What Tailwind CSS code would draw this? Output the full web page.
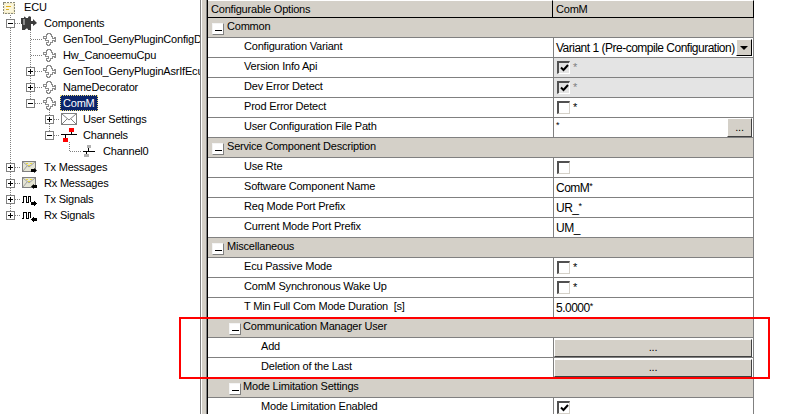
<!DOCTYPE html>
<html lang="en">
<head>
    <meta charset="UTF-8">
    <title>ComM Configuration</title>
    <script src="https://cdn.jsdelivr.net/npm/@tailwindcss/browser@4"></script>
</head>
<body class="bg-white">
<div class="relative w-[791px] h-[414px] overflow-hidden flex bg-white text-black text-[11px] leading-none tracking-[-0.2px] font-['Liberation_Sans',Arial,sans-serif]">

    <!-- Tree -->
    <div class="relative w-[201px] h-full shrink-0 overflow-hidden border-r border-[#808080]">
        <svg class="absolute left-0 top-0" width="200" height="230" fill="none" stroke="#808080" stroke-dasharray="1 1">
            <path d="M10.5 13V19M10.5 28V163M10.5 172V179M10.5 188V195M10.5 204V211"/>
            <path d="M15 23.5H20M15 167.5H21M15 183.5H21M15 199.5H21M15 215.5H21"/>
            <path d="M30.5 30V67M30.5 76V83M30.5 92V99"/>
            <path d="M31 39.5H42M31 55.5H42M35 71.5H42M35 87.5H42M35 103.5H42"/>
            <path d="M49.5 108V115M49.5 124V131"/>
            <path d="M54 119.5H60M54 135.5H60"/>
            <path d="M69.5 142V151M70 151.5H82"/>
        </svg>

        <div class="relative flex flex-col">
            <!-- ECU -->
            <div class="flex items-center h-[15px] pl-[3px]">
                <svg class="shrink-0 mr-[9px]" width="12" height="12" viewBox="0 0 12 12" shape-rendering="crispEdges"><rect x="0.5" y="0.5" width="11" height="11" fill="#f4ecc8" stroke="#8a8a7a" stroke-dasharray="2 1"/><rect x="2" y="2" width="8" height="8" fill="#fbf6dc"/><path d="M3 4.5H8M3 7.5H6" stroke="#e0b020"/></svg>
                <span>ECU</span>
            </div>
            <!-- Components -->
            <div class="flex items-center h-4 pl-[6px]">
                <span class="flex shrink-0 items-center justify-center w-[9px] h-[9px] mr-[6px] bg-white border border-[#808080]"><span class="w-[5px] h-px bg-black"></span></span>
                <svg class="shrink-0 mr-[7px]" width="16" height="15" viewBox="0 0 16 15"><path d="M0 2H3C3 0 4 0 5 2H7C7 0 9 0 10 1V5H12V3L16 7L12 10V8H10V14H7C7 12 5 12 4 14H1V8H0Z" fill="#3c3c3c"/><path d="M2 3H4V9H2Z" fill="#8c8c8c"/></svg>
                <span>Components</span>
            </div>
            <!-- Level 2 -->
            <div class="flex items-center h-4 pl-[43px]">
                <svg class="shrink-0 mr-[7px]" width="13" height="13" viewBox="0 0 13 13" fill="#fff" stroke="#8c8c8c" shape-rendering="crispEdges"><path d="M0.5 3.5H3.5V1.5H4.5V0.5H7.5V1.5H8.5V3.5H9.5V5.5H11.5V4.5H12.5V8.5H11.5V7.5H9.5V9.5H7.5V11.5H6.5V12.5H4.5V11.5H3.5V9.5H5.5V7.5H2.5V5.5H0.5Z"/><path d="M3.5 3.5V5.5"/></svg>
                <span class="whitespace-nowrap">GenTool_GenyPluginConfigD</span>
            </div>
            <div class="flex items-center h-4 pl-[43px]">
                <svg class="shrink-0 mr-[7px]" width="13" height="13" viewBox="0 0 13 13" fill="#fff" stroke="#8c8c8c" shape-rendering="crispEdges"><path d="M0.5 3.5H3.5V1.5H4.5V0.5H7.5V1.5H8.5V3.5H9.5V5.5H11.5V4.5H12.5V8.5H11.5V7.5H9.5V9.5H7.5V11.5H6.5V12.5H4.5V11.5H3.5V9.5H5.5V7.5H2.5V5.5H0.5Z"/><path d="M3.5 3.5V5.5"/></svg>
                <span>Hw_CanoeemuCpu</span>
            </div>
            <div class="flex items-center h-4 pl-[26px]">
                <span class="relative flex shrink-0 items-center justify-center w-[9px] h-[9px] mr-[8px] bg-white border border-[#808080]"><span class="w-[5px] h-px bg-black"></span><span class="absolute w-px h-[5px] bg-black"></span></span>
                <svg class="shrink-0 mr-[7px]" width="13" height="13" viewBox="0 0 13 13" fill="#fff" stroke="#8c8c8c" shape-rendering="crispEdges"><path d="M0.5 3.5H3.5V1.5H4.5V0.5H7.5V1.5H8.5V3.5H9.5V5.5H11.5V4.5H12.5V8.5H11.5V7.5H9.5V9.5H7.5V11.5H6.5V12.5H4.5V11.5H3.5V9.5H5.5V7.5H2.5V5.5H0.5Z"/><path d="M3.5 3.5V5.5"/></svg>
                <span class="whitespace-nowrap">GenTool_GenyPluginAsrIfEcu</span>
            </div>
            <div class="flex items-center h-4 pl-[26px]">
                <span class="relative flex shrink-0 items-center justify-center w-[9px] h-[9px] mr-[8px] bg-white border border-[#808080]"><span class="w-[5px] h-px bg-black"></span><span class="absolute w-px h-[5px] bg-black"></span></span>
                <svg class="shrink-0 mr-[7px]" width="13" height="13" viewBox="0 0 13 13" fill="#fff" stroke="#8c8c8c" shape-rendering="crispEdges"><path d="M0.5 3.5H3.5V1.5H4.5V0.5H7.5V1.5H8.5V3.5H9.5V5.5H11.5V4.5H12.5V8.5H11.5V7.5H9.5V9.5H7.5V11.5H6.5V12.5H4.5V11.5H3.5V9.5H5.5V7.5H2.5V5.5H0.5Z"/><path d="M3.5 3.5V5.5"/></svg>
                <span>NameDecorator</span>
            </div>
            <!-- ComM selected -->
            <div class="flex items-center h-4 pl-[26px]">
                <span class="flex shrink-0 items-center justify-center w-[9px] h-[9px] mr-[8px] bg-white border border-[#808080]"><span class="w-[5px] h-px bg-black"></span></span>
                <svg class="shrink-0 mr-[4px]" width="13" height="13" viewBox="0 0 13 13" fill="#fff" stroke="#8c8c8c" shape-rendering="crispEdges"><path d="M0.5 3.5H3.5V1.5H4.5V0.5H7.5V1.5H8.5V3.5H9.5V5.5H11.5V4.5H12.5V8.5H11.5V7.5H9.5V9.5H7.5V11.5H6.5V12.5H4.5V11.5H3.5V9.5H5.5V7.5H2.5V5.5H0.5Z"/><path d="M3.5 3.5V5.5"/></svg>
                <span class="flex items-center h-4 px-[2px] bg-[#0a246a] text-white border border-dotted border-[#f0e080]">ComM</span>
            </div>
            <!-- Level 3 -->
            <div class="flex items-center h-4 pl-[45px]">
                <span class="relative flex shrink-0 items-center justify-center w-[9px] h-[9px] mr-[7px] bg-white border border-[#808080]"><span class="w-[5px] h-px bg-black"></span><span class="absolute w-px h-[5px] bg-black"></span></span>
                <svg class="shrink-0 mr-[6px]" width="16" height="12" viewBox="0 0 16 12" fill="#fff" stroke="#808080"><rect x="0.5" y="0.5" width="15" height="11"/><path d="M1 1L8 7L15 1M1 11L6 6M15 11L10 6"/></svg>
                <span>User Settings</span>
            </div>
            <div class="flex items-center h-4 pl-[45px]">
                <span class="flex shrink-0 items-center justify-center w-[9px] h-[9px] mr-[7px] bg-white border border-[#808080]"><span class="w-[5px] h-px bg-black"></span></span>
                <svg class="shrink-0 mr-[6px]" width="16" height="15" viewBox="0 0 16 15" shape-rendering="crispEdges"><path d="M0 6.5H16" stroke="#000"/><path d="M10.5 4V6M4.5 7V10" stroke="#000"/><rect x="8" y="0" width="5" height="4" fill="#f00"/><rect x="2" y="10" width="5" height="4" fill="#f00"/></svg>
                <span>Channels</span>
            </div>
            <div class="flex items-center h-4 pl-[83px]">
                <svg class="shrink-0 mr-[8px]" width="12" height="13" viewBox="0 0 12 13" shape-rendering="crispEdges"><path d="M0 6.5H12" stroke="#000"/><path d="M5.5 3V6M3.5 7V9" stroke="#000"/><rect x="4" y="0" width="4" height="3" fill="#b0b0b0"/><rect x="1" y="9" width="5" height="3" fill="#b0b0b0"/></svg>
                <span>Channel0</span>
            </div>
            <!-- Level 1 -->
            <div class="flex items-center h-4 pl-[6px]">
                <span class="relative flex shrink-0 items-center justify-center w-[9px] h-[9px] mr-[7px] bg-white border border-[#808080]"><span class="w-[5px] h-px bg-black"></span><span class="absolute w-px h-[5px] bg-black"></span></span>
                <svg class="shrink-0 mr-[7px]" width="15" height="14" viewBox="0 0 15 14"><rect x="0.5" y="1.5" width="13" height="10" fill="#e4e4d4" stroke="#808080"/><path d="M1 2L7 7L13 2M1 11L5 6" fill="none" stroke="#a0a0a0"/><path d="M4 3.5H6M8 3.5H10M6 5.5H8" stroke="#e8d840"/><path d="M9 9H12V8L15 10.5L12 13V12H9Z"/></svg>
                <span>Tx Messages</span>
            </div>
            <div class="flex items-center h-4 pl-[6px]">
                <span class="relative flex shrink-0 items-center justify-center w-[9px] h-[9px] mr-[7px] bg-white border border-[#808080]"><span class="w-[5px] h-px bg-black"></span><span class="absolute w-px h-[5px] bg-black"></span></span>
                <svg class="shrink-0 mr-[7px]" width="15" height="14" viewBox="0 0 15 14"><rect x="0.5" y="1.5" width="13" height="10" fill="#e4e4d4" stroke="#808080"/><path d="M1 2L7 7L13 2M1 11L5 6" fill="none" stroke="#a0a0a0"/><path d="M4 3.5H6M8 3.5H10M6 5.5H8" stroke="#e8d840"/><path d="M15 9H12V8L9 10.5L12 13V12H15Z"/></svg>
                <span>Rx Messages</span>
            </div>
            <div class="flex items-center h-4 pl-[6px]">
                <span class="relative flex shrink-0 items-center justify-center w-[9px] h-[9px] mr-[7px] bg-white border border-[#808080]"><span class="w-[5px] h-px bg-black"></span><span class="absolute w-px h-[5px] bg-black"></span></span>
                <svg class="shrink-0 mr-[7px]" width="15" height="14" viewBox="0 0 15 14" fill="none" shape-rendering="crispEdges"><path d="M0 10.5H1.5V4.5H4.5V10.5H6.5V4.5H8.5V10" stroke="#000"/><path d="M9 10H12V9L15 11.5L12 14V13H9Z" fill="#000"/></svg>
                <span>Tx Signals</span>
            </div>
            <div class="flex items-center h-4 pl-[6px]">
                <span class="relative flex shrink-0 items-center justify-center w-[9px] h-[9px] mr-[7px] bg-white border border-[#808080]"><span class="w-[5px] h-px bg-black"></span><span class="absolute w-px h-[5px] bg-black"></span></span>
                <svg class="shrink-0 mr-[7px]" width="15" height="14" viewBox="0 0 15 14" fill="none" shape-rendering="crispEdges"><path d="M0 10.5H1.5V4.5H4.5V10.5H6.5V4.5H8.5V10" stroke="#000"/><path d="M15 10H12V9L9 11.5L12 14V13H15Z" fill="#000"/></svg>
                <span>Rx Signals</span>
            </div>
        </div>
    </div>

    <!-- Splitter -->
    <div class="w-[6px] h-full shrink-0 bg-[#d4d0c8] border-l border-white border-r border-r-[#808080]"></div>

    <!-- Grid -->
    <div class="w-[547px] h-full shrink-0 overflow-hidden border-l border-black">
        <div class="grid grid-cols-[345px_201px] w-[546px]">
            <!-- Header -->
            <div class="flex items-center h-[18px] pl-[3px] bg-[#d4d0c8] border-t border-white border-r border-r-black border-b border-b-black">Configurable Options</div>
            <div class="flex items-center h-[18px] pl-[3px] bg-[#d4d0c8] border-t border-white border-r border-r-black border-b border-b-black">ComM</div>
        </div>

        <div class="w-[546px] border-r border-[#808080]">
            <!-- Common -->
            <div class="flex h-5 pl-[4px] bg-[#d4d0c8] border-b border-[#808080]">
                <span class="flex items-center justify-center w-3 h-3 mt-[5px] mr-[3px] bg-white border-l border-t border-[#f4f4f4] border-r border-b border-r-[#808080] border-b-[#808080]"><span class="w-[7px] h-px mt-[3px] bg-black"></span></span>
                <span class="mt-[3px]">Common</span>
            </div>
            <div class="grid grid-cols-[346px_1fr] h-5 border-b border-[#808080]">
                <div class="pl-[36px] pt-[3px] border-r border-[#808080]">Configuration Variant</div>
                <div class="flex items-center justify-between pl-[2px] pr-px">
                    <span class="text-[12px] tracking-[-0.5px] whitespace-nowrap">Variant 1 (Pre-compile Configuration)</span>
                    <span class="flex items-center justify-center w-4 h-[17px] bg-[#d4d0c8] border border-t-white border-l-white border-r-black border-b-black"><span class="border-x-[4px] border-t-[4px] border-x-transparent border-t-black"></span></span>
                </div>
            </div>
            <div class="grid grid-cols-[346px_1fr] h-5 border-b border-[#808080]">
                <div class="pl-[36px] pt-[3px] border-r border-[#808080] bg-white">Version Info Api</div>
                <div class="flex items-center pl-[3px] bg-[#e4e4e4]">
                    <span class="flex items-center justify-center w-[13px] h-[13px] mr-[3px] border-t-2 border-l-2 border-r border-b border-t-[#505050] border-l-[#505050] border-r-white border-b-white"><svg width="9" height="8" viewBox="0 0 9 8" fill="none"><path d="M1 3.5L3.5 6L8 1" stroke="#000" stroke-width="2"/></svg></span>
                    <span class="text-[#808080]">*</span>
                </div>
            </div>
            <div class="grid grid-cols-[346px_1fr] h-5 border-b border-[#808080]">
                <div class="pl-[36px] pt-[3px] border-r border-[#808080]">Dev Error Detect</div>
                <div class="flex items-center pl-[3px] bg-[#e4e4e4]">
                    <span class="flex items-center justify-center w-[13px] h-[13px] mr-[3px] border-t-2 border-l-2 border-r border-b border-t-[#505050] border-l-[#505050] border-r-white border-b-white"><svg width="9" height="8" viewBox="0 0 9 8" fill="none"><path d="M1 3.5L3.5 6L8 1" stroke="#000" stroke-width="2"/></svg></span>
                    <span class="text-[#808080]">*</span>
                </div>
            </div>
            <div class="grid grid-cols-[346px_1fr] h-5 border-b border-[#808080]">
                <div class="pl-[36px] pt-[3px] border-r border-[#808080]">Prod Error Detect</div>
                <div class="flex items-center pl-[3px]">
                    <span class="w-[13px] h-[13px] mr-[3px] border-t-2 border-l-2 border-r border-b border-t-[#505050] border-l-[#505050] border-r-[#d4d0c8] border-b-[#d4d0c8]"></span>
                    <span>*</span>
                </div>
            </div>
            <div class="grid grid-cols-[346px_1fr] h-5 border-b border-[#808080]">
                <div class="pl-[36px] pt-[3px] border-r border-[#808080]">User Configuration File Path</div>
                <div class="flex justify-between pl-[2px] pr-px">
                    <span class="pt-[3px] text-[9px]">*</span>
                    <span class="flex items-end justify-center w-[25px] h-[19px] pb-[3px] bg-[#d4d0c8] border border-t-white border-l-white border-r-[#404040] border-b-[#404040]">...</span>
                </div>
            </div>

            <!-- Service Component Description -->
            <div class="flex h-5 pl-[4px] bg-[#d4d0c8] border-b border-[#808080]">
                <span class="flex items-center justify-center w-3 h-3 mt-[5px] mr-[3px] bg-white border-l border-t border-[#f4f4f4] border-r border-b border-r-[#808080] border-b-[#808080]"><span class="w-[7px] h-px mt-[3px] bg-black"></span></span>
                <span class="mt-[3px]">Service Component Description</span>
            </div>
            <div class="grid grid-cols-[346px_1fr] h-5 border-b border-[#808080]">
                <div class="pl-[36px] pt-[3px] border-r border-[#808080]">Use Rte</div>
                <div class="flex items-center pl-[3px]">
                    <span class="w-[13px] h-[13px] mr-[3px] border-t-2 border-l-2 border-r border-b border-t-[#505050] border-l-[#505050] border-r-[#d4d0c8] border-b-[#d4d0c8]"></span>
                </div>
            </div>
            <div class="grid grid-cols-[346px_1fr] h-5 border-b border-[#808080]">
                <div class="pl-[36px] pt-[3px] border-r border-[#808080]">Software Component Name</div>
                <div class="flex items-center pl-[2px] text-[12px] tracking-[-0.5px]"><span>ComM<span class="text-[9px] align-top">*</span></span></div>
            </div>
            <div class="grid grid-cols-[346px_1fr] h-5 border-b border-[#808080]">
                <div class="pl-[36px] pt-[3px] border-r border-[#808080]">Req Mode Port Prefix</div>
                <div class="flex items-center pl-[2px] text-[12px] tracking-[-0.5px]"><span>UR_<span class="text-[9px] align-top">*</span></span></div>
            </div>
            <div class="grid grid-cols-[346px_1fr] h-5 border-b border-[#808080]">
                <div class="pl-[36px] pt-[3px] border-r border-[#808080]">Current Mode Port Prefix</div>
                <div class="flex items-center pl-[2px] text-[12px] tracking-[-0.5px]">UM_</div>
            </div>

            <!-- Miscellaneous -->
            <div class="flex h-5 pl-[4px] bg-[#d4d0c8] border-b border-[#808080]">
                <span class="flex items-center justify-center w-3 h-3 mt-[5px] mr-[3px] bg-white border-l border-t border-[#f4f4f4] border-r border-b border-r-[#808080] border-b-[#808080]"><span class="w-[7px] h-px mt-[3px] bg-black"></span></span>
                <span class="mt-[3px]">Miscellaneous</span>
            </div>
            <div class="grid grid-cols-[346px_1fr] h-5 border-b border-[#808080]">
                <div class="pl-[36px] pt-[3px] border-r border-[#808080]">Ecu Passive Mode</div>
                <div class="flex items-center pl-[3px]">
                    <span class="w-[13px] h-[13px] mr-[3px] border-t-2 border-l-2 border-r border-b border-t-[#505050] border-l-[#505050] border-r-[#d4d0c8] border-b-[#d4d0c8]"></span>
                    <span>*</span>
                </div>
            </div>
            <div class="grid grid-cols-[346px_1fr] h-5 border-b border-[#808080]">
                <div class="pl-[36px] pt-[3px] border-r border-[#808080]">ComM Synchronous Wake Up</div>
                <div class="flex items-center pl-[3px]">
                    <span class="w-[13px] h-[13px] mr-[3px] border-t-2 border-l-2 border-r border-b border-t-[#505050] border-l-[#505050] border-r-[#d4d0c8] border-b-[#d4d0c8]"></span>
                    <span>*</span>
                </div>
            </div>
            <div class="grid grid-cols-[346px_1fr] h-5 border-b border-[#808080]">
                <div class="pl-[36px] pt-[3px] border-r border-[#808080]">T Min Full Com Mode Duration&nbsp; [s]</div>
                <div class="flex items-center pl-[2px] text-[12px] tracking-[-0.5px]"><span>5.0000<span class="text-[9px] align-top">*</span></span></div>
            </div>

            <!-- Communication Manager User -->
            <div class="flex h-5 pl-[21px] bg-[#d4d0c8] border-b border-[#808080]">
                <span class="flex items-center justify-center w-3 h-3 mt-[5px] mr-[2px] bg-white border-l border-t border-[#f4f4f4] border-r border-b border-r-[#808080] border-b-[#808080]"><span class="w-[7px] h-px mt-[3px] bg-black"></span></span>
                <span class="mt-[3px]">Communication Manager User</span>
            </div>
            <div class="grid grid-cols-[346px_1fr] h-5 border-b border-[#808080]">
                <div class="pl-[53px] pt-[3px] border-r border-[#808080]">Add</div>
                <div class="pr-px pt-px"><span class="flex items-end justify-center h-[18px] pb-[3px] bg-[#d4d0c8] border border-t-white border-l-white border-r-[#404040] border-b-[#404040]">...</span></div>
            </div>
            <div class="grid grid-cols-[346px_1fr] h-5 border-b border-[#808080]">
                <div class="pl-[53px] pt-[3px] border-r border-[#808080]">Deletion of the Last</div>
                <div class="pr-px pt-px"><span class="flex items-end justify-center h-[18px] pb-[3px] bg-[#d4d0c8] border border-t-white border-l-white border-r-[#404040] border-b-[#404040]">...</span></div>
            </div>

            <!-- Mode Limitation Settings -->
            <div class="flex h-5 pl-[21px] bg-[#d4d0c8] border-b border-[#808080]">
                <span class="flex items-center justify-center w-3 h-3 mt-[5px] mr-[2px] bg-white border-l border-t border-[#f4f4f4] border-r border-b border-r-[#808080] border-b-[#808080]"><span class="w-[7px] h-px mt-[3px] bg-black"></span></span>
                <span class="mt-[3px]">Mode Limitation Settings</span>
            </div>
            <div class="grid grid-cols-[346px_1fr] h-5 border-b border-[#808080]">
                <div class="pl-[53px] pt-[3px] border-r border-[#808080]">Mode Limitation Enabled</div>
                <div class="flex items-center pl-[3px]">
                    <span class="flex items-center justify-center w-[13px] h-[13px] border-t-2 border-l-2 border-r border-b border-t-[#505050] border-l-[#505050] border-r-[#d4d0c8] border-b-[#d4d0c8]"><svg width="9" height="8" viewBox="0 0 9 8" fill="none"><path d="M1 3.5L3.5 6L8 1" stroke="#000" stroke-width="2"/></svg></span>
                </div>
            </div>
        </div>
    </div>

    <!-- Red highlight drawn over the screenshot -->
    <div class="absolute left-[179px] top-[317px] w-[591px] h-[62px] border-2 border-[#ff0000]"></div>
</div>
</body>
</html>
